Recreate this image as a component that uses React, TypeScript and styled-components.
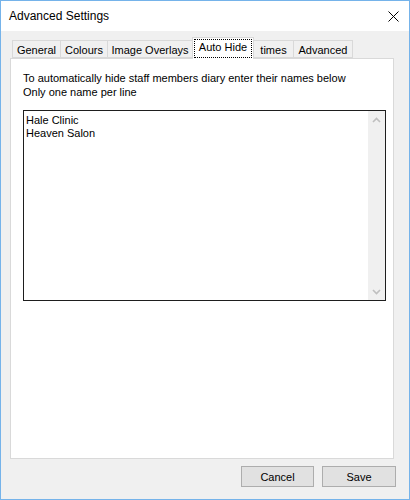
import React from "react";
import styled, { createGlobalStyle } from "styled-components";

const Global = createGlobalStyle`
  html, body { margin: 0; padding: 0; background: #ffffff; }
  body { font-family: "Liberation Sans", Arial, sans-serif; font-size: 11px; color: #000; }
  * { box-sizing: border-box; }
`;

const Window = styled.div`
  width: 410px;
  height: 500px;
  border: 1px solid #75b3ea;
  display: flex;
  flex-direction: column;
  background: #f0f0f0;
`;

const TitleBar = styled.div`
  height: 30px;
  background: #ffffff;
  display: flex;
  align-items: center;
  justify-content: space-between;
  padding: 0 10px 0 8px;
`;

const Title = styled.span`
  font-family: "Liberation Sans", Arial, sans-serif;
  font-size: 12px;
  color: #000;
`;

const CloseIcon = styled.svg`
  width: 11px;
  height: 11px;
  display: block;
`;

const Body = styled.div`
  flex: 1;
  display: flex;
  flex-direction: column;
  padding: 6px 15px 12px 9px;
  min-height: 0;
`;

const TabStrip = styled.div`
  height: 22px;
  display: flex;
  align-items: flex-end;
  padding-left: 2px;
  margin-bottom: -1px;
  position: relative;
  z-index: 1;
`;

const Tab = styled.div<{ $w: number; $active?: boolean }>`
  width: ${(p) => p.$w}px;
  height: ${(p) => (p.$active ? 22 : 18)}px;
  margin-bottom: ${(p) => (p.$active ? 0 : 1)}px;
  margin-left: -1px;
  &:first-child { margin-left: 0; }
  border: 1px solid #d9d9d9;
  border-bottom: ${(p) => (p.$active ? "none" : "1px solid #d9d9d9")};
  background: ${(p) => (p.$active ? "#ffffff" : "#f0f0f0")};
  display: flex;
  align-items: center;
  justify-content: center;
  padding: ${(p) => (p.$active ? "0 1px 3px" : "2px 1px 0")};
  white-space: nowrap;
  font-size: 11px;
  line-height: 13px;
  position: relative;
`;

const FocusRect = styled.div`
  position: absolute;
  left: 1px;
  right: 1px;
  top: 1px;
  bottom: 1px;
  border: 1px dotted #000;
  pointer-events: none;
`;

const Panel = styled.div`
  flex: 1;
  background: #ffffff;
  border: 1px solid #d9d9d9;
  padding: 12px 7px 0 12px;
  display: flex;
  flex-direction: column;
`;

const Label = styled.div`
  font-size: 11px;
  line-height: 14px;
`;

const TextBox = styled.div`
  margin-top: 11px;
  width: 363px;
  height: 191px;
  border: 1px solid #1e1e1e;
  display: flex;
  background: #fff;
`;

const TextContent = styled.div`
  flex: 1;
  padding: 3px 2px;
  font-size: 11px;
  line-height: 13px;
`;

const ScrollTrack = styled.div`
  width: 17px;
  background: #f0f0f0;
  display: flex;
  flex-direction: column;
  justify-content: space-between;
`;

const ArrowBtn = styled.div`
  height: 17px;
  display: flex;
  align-items: center;
  justify-content: center;
`;

const Footer = styled.div`
  display: flex;
  justify-content: flex-end;
  gap: 8px;
  margin-top: 7px;
  margin-right: -2px;
`;

const Button = styled.div<{ $w: number }>`
  width: ${(p) => p.$w}px;
  height: 21px;
  background: #e1e1e1;
  border: 1px solid #adadad;
  display: flex;
  align-items: center;
  justify-content: center;
  font-size: 11px;
  line-height: 13px;
  padding-top: 1px;
`;

const Chevron = ({ up }: { up?: boolean }) => (
  <svg width="9" height="6" viewBox="0 0 9 6">
    <polyline
      points={up ? "1,5 4.5,1.5 8,5" : "1,1 4.5,4.5 8,1"}
      fill="none"
      stroke="#bfbfbf"
      strokeWidth="1.6"
    />
  </svg>
);

const tabs = [
  { label: "General", w: 49 },
  { label: "Colours", w: 48 },
  { label: "Image Overlays", w: 86 },
  { label: "Auto Hide", w: 62, active: true },
  { label: "times", w: 41 },
  { label: "Advanced", w: 60 },
];

export default function App() {
  return (
    <>
      <Global />
      <Window>
        <TitleBar>
          <Title>Advanced Settings</Title>
          <CloseIcon viewBox="0 0 11 11">
            <path d="M0.5 0.5 L10.5 10.5 M10.5 0.5 L0.5 10.5" stroke="#000" strokeWidth="1" />
          </CloseIcon>
        </TitleBar>
        <Body>
          <TabStrip>
            {tabs.map((t) => (
              <Tab key={t.label} $w={t.w} $active={t.active}>
                {t.label}
                {t.active && <FocusRect />}
              </Tab>
            ))}
          </TabStrip>
          <Panel>
            <Label>
              To automatically hide staff members diary enter their names below
              <br />
              Only one name per line
            </Label>
            <TextBox>
              <TextContent>
                Hale Clinic
                <br />
                Heaven Salon
              </TextContent>
              <ScrollTrack>
                <ArrowBtn>
                  <Chevron up />
                </ArrowBtn>
                <ArrowBtn>
                  <Chevron />
                </ArrowBtn>
              </ScrollTrack>
            </TextBox>
          </Panel>
          <Footer>
            <Button $w={73}>Cancel</Button>
            <Button $w={74}>Save</Button>
          </Footer>
        </Body>
      </Window>
    </>
  );
}
